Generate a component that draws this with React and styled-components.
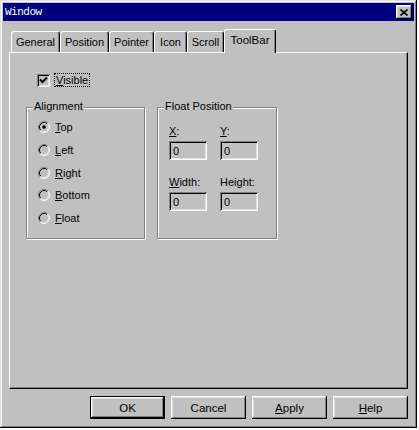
import React from 'react';
import styled, { createGlobalStyle, css } from 'styled-components';

const GlobalStyle = createGlobalStyle`
  body {
    margin: 0;
    background: #ffffff;
    font-family: "Liberation Sans", Arial, sans-serif;
    font-size: 11px;
    color: #000;
  }
`;

const raised = css`
  box-shadow: inset -1px -1px #000, inset 1px 1px #fff, inset -2px -2px #808080, inset 2px 2px #dfdfdf;
`;

const sunken = css`
  box-shadow: inset 1px 1px #808080, inset -1px -1px #fff, inset 2px 2px #000, inset -2px -2px #dfdfdf;
`;

const tabs = [
  { label: 'General', width: 49 },
  { label: 'Position', width: 49 },
  { label: 'Pointer', width: 45 },
  { label: 'Icon', width: 33 },
  { label: 'Scroll', width: 37 },
  { label: 'ToolBar', width: 52, active: true },
];

const radios = [
  { key: 'T', rest: 'op', checked: true },
  { key: 'L', rest: 'eft' },
  { key: 'R', rest: 'ight' },
  { key: 'B', rest: 'ottom' },
  { key: 'F', rest: 'loat' },
];

const RadioIcon = ({ checked }) => (
  <svg width="12" height="12" viewBox="0 0 12 12">
    <path d="M2.11 9.89 A5.5 5.5 0 0 1 9.89 2.11" fill="none" stroke="#808080" />
    <path d="M9.89 2.11 A5.5 5.5 0 0 1 2.11 9.89" fill="none" stroke="#fff" />
    <path d="M2.82 9.18 A4.5 4.5 0 0 1 9.18 2.82" fill="none" stroke="#000" />
    <path d="M9.18 2.82 A4.5 4.5 0 0 1 2.82 9.18" fill="none" stroke="#dfdfdf" />
    {checked && <circle cx="6" cy="6" r="1.8" fill="#000" />}
  </svg>
);

const App = () => {
  return (
    <>
      <GlobalStyle />
      <Window>
        <TitleBar>
          <Title>Window</Title>
          <CloseButton>
            <svg width="8" height="7" viewBox="0 0 8 7">
              <path d="M0.5 0.5 L7.5 6.5 M7.5 0.5 L0.5 6.5" stroke="#000" strokeWidth="1.6" />
            </svg>
          </CloseButton>
        </TitleBar>

        <Body>
          <TabRow>
            {tabs.map((t) => (
              <Tab key={t.label} $width={t.width} $active={t.active}>
                {t.label}
              </Tab>
            ))}
          </TabRow>

          <Panel>
            <CheckRow>
              <CheckBox>
                <svg width="9" height="9" viewBox="0 0 9 9">
                  <path d="M1 3.5 L3.5 6 L8 1.5" fill="none" stroke="#000" strokeWidth="2" />
                </svg>
              </CheckBox>
              <FocusLabel>
                <U>V</U>isible
              </FocusLabel>
            </CheckRow>

            <GroupRow>
              <GroupBox $width={119} $pad="13px 0 0 11px">
                <GroupLabel>Alignment</GroupLabel>
                {radios.map((r) => (
                  <RadioRow key={r.key}>
                    <RadioIcon checked={r.checked} />
                    <span>
                      <U>{r.key}</U>
                      {r.rest}
                    </span>
                  </RadioRow>
                ))}
              </GroupBox>

              <GroupBox $width={120} $pad="17px 0 0 11px">
                <GroupLabel>Float Position</GroupLabel>
                <FieldGrid>
                  <FieldLabel>
                    <U>X</U>:
                  </FieldLabel>
                  <FieldLabel>
                    <U>Y</U>:
                  </FieldLabel>
                  <Field>0</Field>
                  <Field>0</Field>
                  <FieldLabel $top>
                    <U>W</U>idth:
                  </FieldLabel>
                  <FieldLabel $top>
                    Hei<U>g</U>ht:
                  </FieldLabel>
                  <Field>0</Field>
                  <Field>0</Field>
                </FieldGrid>
              </GroupBox>
            </GroupRow>
          </Panel>

          <ButtonRow>
            <Button $default>OK</Button>
            <Button>Cancel</Button>
            <Button>
              <U>A</U>pply
            </Button>
            <Button>
              <U>H</U>elp
            </Button>
          </ButtonRow>
        </Body>
      </Window>
    </>
  );
};

const Window = styled.div`
  width: 417px;
  height: 428px;
  box-sizing: border-box;
  padding: 3px;
  background: #c0c0c0;
  box-shadow: inset -1px -1px #000, inset 1px 1px #dfdfdf, inset -2px -2px #808080, inset 2px 2px #fff;
`;

const TitleBar = styled.div`
  height: 18px;
  background: #000080;
  display: flex;
  align-items: center;
  justify-content: space-between;
  padding: 0 2px 0 2px;
`;

const Title = styled.span`
  color: #fff;
  font-family: "Liberation Mono", "DejaVu Sans Mono", monospace;
  font-size: 11px;
  letter-spacing: -0.5px;
`;

const CloseButton = styled.div`
  width: 16px;
  height: 14px;
  box-sizing: border-box;
  background: #c0c0c0;
  display: flex;
  align-items: center;
  justify-content: center;
  ${raised}
`;

const Body = styled.div`
  padding: 8px 6px 0 6px;
`;

const TabRow = styled.div`
  display: flex;
  align-items: flex-end;
  height: 23px;
  padding-left: 2px;
`;

const Tab = styled.div`
  width: ${(p) => p.$width}px;
  height: ${(p) => (p.$active ? 24 : 21)}px;
  margin-bottom: ${(p) => (p.$active ? -1 : 0)}px;
  box-sizing: border-box;
  position: relative;
  z-index: ${(p) => (p.$active ? 1 : 0)};
  background: #c0c0c0;
  border-top: 1px solid #fff;
  border-left: 1px solid #fff;
  border-right: 1px solid #000;
  border-radius: 3px 3px 0 0;
  box-shadow: inset -1px 0 #808080;
  display: flex;
  align-items: center;
  justify-content: center;
  padding-bottom: ${(p) => (p.$active ? 4 : 0)}px;
  font-size: ${(p) => (p.$active ? 11.5 : 11)}px;
`;

const Panel = styled.div`
  height: 337px;
  box-sizing: border-box;
  padding: 20px 0 0 16px;
  border-top: 1px solid #fff;
  border-left: 1px solid #fff;
  border-right: 1px solid #000;
  border-bottom: 1px solid #000;
  box-shadow: inset -1px -1px #808080;
`;

const CheckRow = styled.div`
  display: flex;
  align-items: center;
  gap: 4px;
  margin-left: 11px;
  height: 14px;
`;

const CheckBox = styled.div`
  width: 13px;
  height: 13px;
  box-sizing: border-box;
  background: #c0c0c0;
  display: flex;
  align-items: center;
  justify-content: center;
  ${sunken}
`;

const FocusLabel = styled.span`
  border: 1px dotted #000;
  padding: 0 1px;
  line-height: 12px;
`;

const U = styled.span`
  text-decoration: underline;
  text-underline-offset: 1px;
`;

const GroupRow = styled.div`
  display: flex;
  align-items: flex-start;
  gap: 12px;
  margin-top: 20px;
`;

const GroupBox = styled.div`
  position: relative;
  width: ${(p) => p.$width}px;
  height: 132px;
  box-sizing: border-box;
  padding: ${(p) => p.$pad};
  border: 1px solid #808080;
  box-shadow: 1px 1px 0 #fff, inset 1px 1px 0 #fff;
`;

const GroupLabel = styled.span`
  position: absolute;
  top: -8px;
  left: 6px;
  padding: 0 1px;
  background: #c0c0c0;
  line-height: 13px;
  font-size: 11px;
`;

const RadioRow = styled.div`
  display: flex;
  align-items: center;
  gap: 5px;
  height: 12px;
  margin-bottom: 10.8px;
`;

const FieldGrid = styled.div`
  display: grid;
  grid-template-columns: 38px 38px;
  column-gap: 13px;
  row-gap: 3px;
`;

const FieldLabel = styled.div`
  line-height: 13px;
  margin-top: ${(p) => (p.$top ? 13 : 0)}px;
`;

const Field = styled.div`
  height: 19px;
  box-sizing: border-box;
  padding-left: 4px;
  display: flex;
  align-items: center;
  background: #c0c0c0;
  ${sunken}
`;

const ButtonRow = styled.div`
  display: flex;
  justify-content: flex-end;
  gap: 6px;
  margin-top: 7px;
`;

const Button = styled.div`
  width: 75px;
  height: 23px;
  box-sizing: border-box;
  display: flex;
  align-items: center;
  justify-content: center;
  background: #c0c0c0;
  font-size: 11.5px;
  ${(p) =>
    p.$default
      ? css`
          border: 1px solid #000;
          box-shadow: inset -1px -1px #000, inset 1px 1px #fff, inset -2px -2px #808080, inset 2px 2px #dfdfdf;
        `
      : raised}
`;

export default App;
